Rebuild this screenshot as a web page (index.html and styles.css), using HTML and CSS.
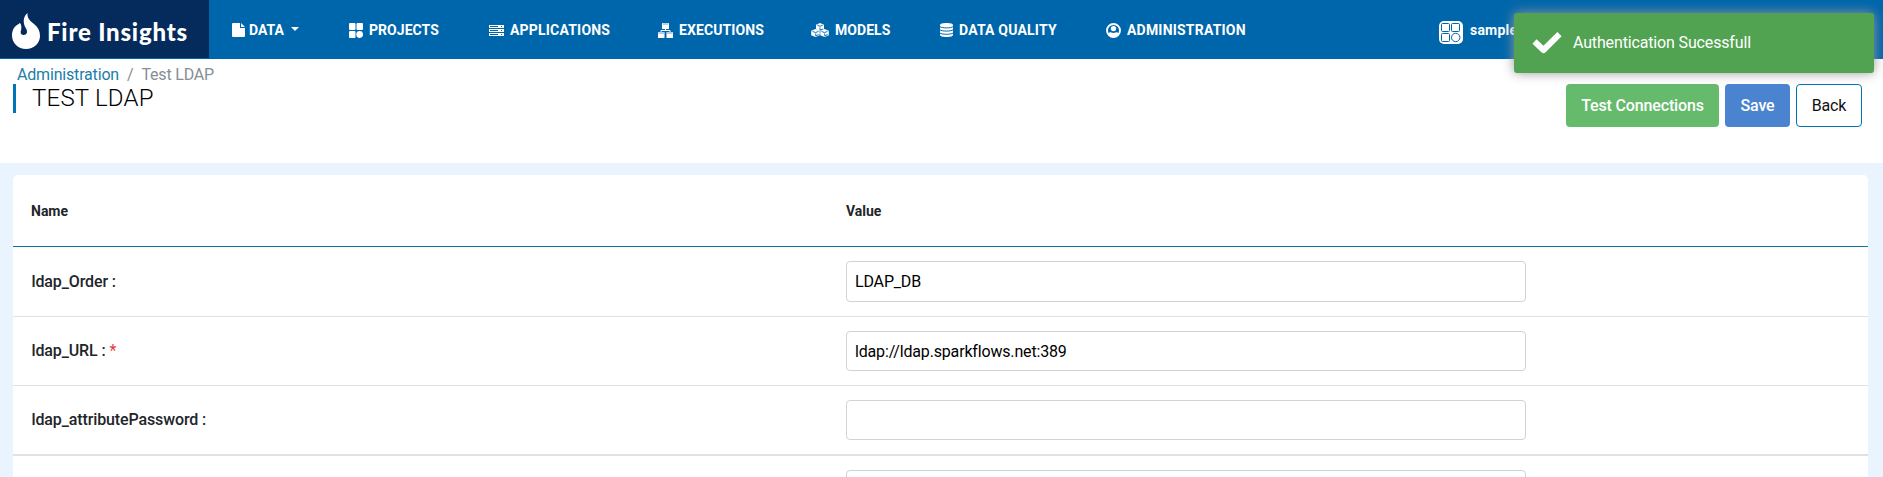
FILE: index.html
```html
<!DOCTYPE html>
<html lang="en">
<head>
<meta charset="utf-8">
<title>Fire Insights - Test LDAP</title>
<link rel="stylesheet" href="styles.css">
</head>
<body>
<header class="topbar">
  <a class="brand">
    <svg class="brand-flame" viewBox="0 0 28 36"><path fill="#fff" d="M14 36C6 36 0 30 0 22.500C0 17 2.500 13.500 5 12C7 10.800 7.500 10.300 7.800 9.700C9.500 11.500 9.600 14 9.200 16.500C8.300 19 8.500 22 11.500 22C15 22 16 19 14 15.500C10.500 10 11 3.500 15.500 0C15 5 18 8 22 11C26 14 28 18 28 23C28 30 22 36 14 36Z"/></svg>
    <span class="brand-name">Fire Insights</span>
  </a>
  <nav class="menu">
    <a class="menu-item menu-data"><svg class="i-file" viewBox="0 0 13 14"><path fill="#fff" d="M1 0h7v5h5v8a1 1 0 0 1-1 1H1a1 1 0 0 1-1-1V1a1 1 0 0 1 1-1zM9 0l4 4H9z"/></svg>DATA<span class="caret"></span></a>
    <a class="menu-item"><svg class="i-proj" viewBox="0 0 14 15"><g fill="#fff"><rect width="6.500" height="7" rx="1"/><rect x="7.500" width="6.500" height="7" rx="1"/><rect y="8" width="6.500" height="7" rx="1"/><circle cx="10.700" cy="11.500" r="3.400"/></g></svg>PROJECTS</a>
    <a class="menu-item menu-wide"><svg class="i-apps" viewBox="0 0 15 11"><path fill="#fff" fill-rule="evenodd" d="M0 0h15v3H0zM0 4h15v3H0zM0 8h15v3H0zM1 1v1h8V1zM1 5v1h8V5zM1 9v1h8V9zM12 1v1h1V1zM12 5v1h1V5zM12 9v1h1V9z"/></svg>APPLICATIONS</a>
    <a class="menu-item menu-exec"><svg class="i-exec" viewBox="0 0 15 15"><g fill="#fff"><rect x="4" width="7" height="6" rx=".6"/><rect y="9" width="6.500" height="6" rx=".6"/><rect x="8.500" y="9" width="6.500" height="6" rx=".6"/></g><path fill="none" stroke="#fff" d="M7.500 6v1.500M3 9V7.500h9V9"/><path stroke="#0066ab" stroke-width=".6" d="M5 1h5M.5 10h5.500M9 10h5.500"/></svg>EXECUTIONS</a>
    <a class="menu-item"><svg class="i-mod" viewBox="0 0 18 14"><g fill="#fff"><path d="M9 0l4 1.700v4.600L9 8 5 6.300V1.700z"/><path d="M4.500 6l4.200 1.800v4.500L4.500 14 .2 12.300V7.800z"/><path d="M13.500 6l4.300 1.800v4.500L13.500 14l-4.200-1.700V7.800z"/></g><path fill="none" stroke="#0066ab" stroke-width=".9" d="M6.200 2.100L9 3.300l2.800-1.200M9 4.500v2.700L12 6M1.500 8.400l3 1.200 3-1.200M4.700 10.500v2.300l3-1.200M10.500 8.400l3 1.200 3-1.200M13.700 10.500v2.300l3-1.200"/></svg>MODELS</a>
    <a class="menu-item menu-wide menu-quality"><svg class="i-db" viewBox="0 0 13 14"><path fill="#fff" d="M0 2C0-.7 13-.7 13 2v10c0 2.700-13 2.700-13 0z"/><path fill="none" stroke="#0066ab" stroke-width="1" d="M0 3.600c1.500 1.700 11.500 1.700 13 0M0 6.800c1.500 1.700 11.500 1.700 13 0M0 10c1.500 1.700 11.500 1.700 13 0"/></svg>DATA QUALITY</a>
    <a class="menu-item menu-wide"><svg class="i-user" viewBox="0 0 15 15"><circle cx="7.500" cy="7.500" r="6.500" fill="none" stroke="#fff" stroke-width="1.900"/><circle cx="7.500" cy="5.600" r="2.700" fill="#fff"/><path fill="#fff" d="M2 10.300c1.500-1 2.400-1.100 3.200-.8 1.500.6 3.100.6 4.600 0 .8-.3 1.700-.2 3.200.8-1.500 5-9.500 5-11 0z"/></svg>ADMINISTRATION</a>
  </nav>
  <a class="account"><svg class="i-grid" viewBox="0 0 24 23"><rect width="24" height="23" rx="5" fill="#fff"/><g fill="#fff" stroke="#0066ab" stroke-width="1"><rect x="2.500" y="2.500" width="8" height="8" rx="1"/><rect x="12.500" y="2.500" width="8" height="8" rx="1"/><rect x="2.500" y="12.500" width="8" height="8" rx="1"/><circle cx="16.700" cy="16.500" r="4.200"/></g></svg><span class="account-name">sample</span></a>
</header>

<section class="page-head">
  <div class="page-info">
    <div class="crumbs"><a class="crumb-link">Administration</a><span class="crumb-sep">/</span><span>Test LDAP</span></div>
    <h1 class="page-title">TEST LDAP</h1>
  </div>
  <div class="actions">
    <button class="btn btn-test">Test Connections</button>
    <button class="btn btn-save">Save</button>
    <button class="btn btn-back">Back</button>
  </div>
</section>

<main class="content">
  <div class="card">
    <div class="row row-head"><span>Name</span><span>Value</span></div>
    <div class="row"><label>ldap_Order :</label><input class="field field-tall" value="LDAP_DB"></div>
    <div class="row"><label>ldap_URL : <span class="required">*</span></label><input class="field" value="ldap://ldap.sparkflows.net:389"></div>
    <div class="row row-group-end"><label>ldap_attributePassword :</label><input class="field"></div>
    <div class="row"><label></label><input class="field"></div>
  </div>
</main>

<div class="toast"><svg class="toast-check" viewBox="0 0 29 22"><path fill="none" stroke="#fff" stroke-width="6" stroke-linejoin="round" d="M2 9.500l9 8.500L27 2.200"/></svg><span>Authentication Sucessfull</span></div>
</body>
</html>
```
FILE: styles.css
```css
* { box-sizing: border-box; }
body {
  margin: 0;
  height: 477px;
  overflow: hidden;
  display: flex;
  flex-direction: column;
  background: #fff;
  color: #212529;
  font: 400 16px/24px Roboto, sans-serif;
}
svg { flex: none; display: block; }

.topbar {
  flex: none;
  display: flex;
  height: 59px;
  background: #0066ab;
  color: #fff;
  font-weight: 700;
  font-size: 14px;
}
.brand {
  display: flex;
  width: 209px;
  height: 58px;
  padding: 13px 0 0 12px;
  gap: 7px;
  background: #052a5c;
}
.brand-flame { width: 28px; height: 36px; }
.brand-name {
  font: 900 24px/37px Lato, sans-serif;
  letter-spacing: 0.8px;
  white-space: nowrap;
}
.menu {
  display: grid;
  grid-template-columns: 117px 140px 169px 153px 129px 166px 140px;
  margin-left: 23px;
  height: 60px;
  align-items: center;
}
.menu-item { display: flex; align-items: center; gap: 6px; white-space: nowrap; letter-spacing: 0.05px; }
.menu-data { gap: 4px; }
.menu-wide { letter-spacing: 0.2px; }
.menu-exec { letter-spacing: 0.1px; }
.menu-quality { gap: 6px; }
.i-file { width: 13px; height: 14px; }
.i-proj { width: 14px; height: 15px; }
.i-apps { width: 15px; height: 11px; }
.i-exec { width: 15px; height: 15px; }
.i-mod { width: 18px; height: 14px; }
.i-db { width: 13px; height: 14px; }
.i-user { width: 15px; height: 15px; }
.i-grid { width: 24px; height: 23px; }
.caret {
  margin: -2px 0 0 3px;
  border: 4px solid transparent;
  border-top-color: #fff;
  border-bottom: 0;
}
.account {
  display: flex;
  align-items: center;
  gap: 7px;
  height: 64px;
  margin-left: 193px;
}
.account-name { padding-bottom: 4px; letter-spacing: 0.2px; }

.page-head {
  flex: none;
  display: flex;
  justify-content: space-between;
  height: 104px;
  padding: 3px 21px 0 13px;
}
.crumbs {
  display: flex;
  height: 22px;
  padding-left: 4px;
  line-height: 25px;
  letter-spacing: -0.18px;
  color: #868e96;
}
.crumb-link { color: #1c7da8; }
.crumb-sep { padding: 0 8px; }
.page-title {
  margin: 0;
  height: 29px;
  padding-left: 16px;
  border-left: 3px solid #0074b5;
  font-size: 24px;
  line-height: 28px;
  font-weight: 300;
  letter-spacing: 0.2px;
  color: #000;
}
.actions { display: flex; gap: 6px; padding-top: 22px; }
.btn {
  height: 43px;
  padding: 0;
  border: 0;
  border-radius: 4px;
  font: 500 16px/24px Roboto, sans-serif;
  letter-spacing: -0.15px;
  color: #fff;
}
.btn-test { width: 153px; background: #66ba6c; }
.btn-save { width: 65px; background: #4a84d0; }
.btn-back { width: 66px; background: #fff; border: 1px solid #0074b5; color: #111; font-weight: 400; }

.content { flex: 1; min-height: 0; overflow: hidden; padding: 12px 15px 0 13px; background: #e9f4ff; }
.card { background: #fff; border-radius: 5px 5px 0 0; height: 320px; }
.row {
  display: grid;
  grid-template-columns: 815px 680px;
  align-items: center;
  padding: 14px 0 14px 18px;
  border-bottom: 1px solid #dee2e6;
  font-weight: 500;
}
.row label { padding-left: 0.5px; letter-spacing: -0.12px; }
.row-head {
  height: 72px;
  padding-top: 15px;
  border-bottom-color: #0f73a6;
  font-size: 14px;
  font-weight: 700;
}
.row-group-end { border-bottom-width: 2px; }
.required { color: #e53935; font-weight: 400; }
.field {
  height: 40px;
  padding: 0 8px;
  border: 1px solid #ced4da;
  border-radius: 4px;
  background: #fff;
  color: #000;
  font: 400 16px/24px Roboto, sans-serif;
  letter-spacing: -0.17px;
}
.field-tall { height: 41px; }

.toast {
  position: absolute;
  top: 13px;
  left: 1514px;
  width: 360px;
  height: 60px;
  display: flex;
  align-items: center;
  gap: 11px;
  padding-left: 18px;
  border-radius: 3px;
  background: #51a351;
  color: #fff;
  letter-spacing: -0.15px;
  box-shadow: 0 0 12px #999;
}
.toast-check { width: 30px; height: 22px; }
```
